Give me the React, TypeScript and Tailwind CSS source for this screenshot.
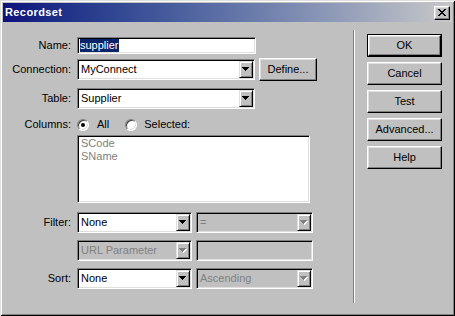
import type { ReactNode } from 'react'

function Arrow({ disabled }: { disabled?: boolean }) {
  return (
    <span className="flex h-full w-[14px] shrink-0 items-center justify-center border border-t-[#dfdfdf] border-l-[#dfdfdf] border-r-black border-b-black bg-[#c0c0c0] shadow-[inset_1px_1px_0_#fff,inset_-1px_-1px_0_#808080]">
      <svg width="8" height="5" viewBox="0 0 8 5" shapeRendering="crispEdges">
        {disabled && (
          <g fill="#fff">
            <rect x="1" y="1" width="7" height="1" />
            <rect x="2" y="2" width="5" height="1" />
            <rect x="3" y="3" width="3" height="1" />
            <rect x="4" y="4" width="1" height="1" />
          </g>
        )}
        <g fill={disabled ? '#808080' : '#000'}>
          <rect x="0" y="0" width="7" height="1" />
          <rect x="1" y="1" width="5" height="1" />
          <rect x="2" y="2" width="3" height="1" />
          <rect x="3" y="3" width="1" height="1" />
        </g>
      </svg>
    </span>
  )
}

function Combo({ value, className, disabled }: { value: string; className: string; disabled?: boolean }) {
  return (
    <div
      className={`flex h-[21px] border border-t-[#808080] border-l-[#808080] border-r-white border-b-white p-[1px] shadow-[inset_1px_1px_0_#000,inset_-1px_-1px_0_#dfdfdf] ${className} ${
        disabled ? 'bg-[#c0c0c0] text-[#808080]' : 'bg-white text-black'
      }`}
    >
      <span className="flex flex-1 items-center pl-[2px]">{value}</span>
      <Arrow disabled={disabled} />
    </div>
  )
}

function Button({ children, isDefault, className = '' }: { children: ReactNode; isDefault?: boolean; className?: string }) {
  const face = (
    <div className="flex h-full w-full items-center justify-center border border-t-white border-l-white border-r-black border-b-black bg-[#c0c0c0] shadow-[inset_-1px_-1px_0_#808080,inset_1px_1px_0_#dfdfdf]">
      {children}
    </div>
  )
  if (isDefault) {
    return <div className={`h-[23px] border border-black ${className}`}>{face}</div>
  }
  return <div className={`h-[23px] ${className}`}>{face}</div>
}

function Radio({ checked }: { checked?: boolean }) {
  return (
    <span className="flex h-[12px] w-[12px] items-center justify-center rounded-full border border-t-[#808080] border-l-[#808080] border-r-white border-b-white bg-white shadow-[inset_1px_1px_0_#404040,inset_-1px_-1px_0_#dfdfdf]">
      {checked && <span className="h-[4px] w-[4px] rounded-full bg-black" />}
    </span>
  )
}

function Row({ label, className = '', children }: { label?: string; className?: string; children: ReactNode }) {
  return (
    <div className={`flex items-center ${className}`}>
      <span className="w-[68px] text-right">{label}</span>
      <div className="ml-[6px] flex items-center">{children}</div>
    </div>
  )
}

export default function App() {
  return (
    <div className="flex h-[316px] w-[455px] flex-col bg-[#c0c0c0] p-[3px] font-['Liberation_Sans',Arial,sans-serif] text-[11px] text-black shadow-[inset_1px_1px_0_#dfdfdf,inset_-1px_-1px_0_#000,inset_2px_2px_0_#fff,inset_-2px_-2px_0_#808080]">
      <div className="flex h-[19px] shrink-0 items-center justify-between bg-linear-to-r from-[#10107c] to-[#c8c8c8] px-[2px]">
        <span className="font-bold tracking-[0.4px] text-white">Recordset</span>
        <div className="flex h-[14px] w-[16px] items-center justify-center border border-t-white border-l-white border-r-black border-b-black bg-[#c0c0c0] shadow-[inset_-1px_-1px_0_#808080,inset_1px_1px_0_#dfdfdf]">
          <svg width="8" height="7" viewBox="0 0 8 7" shapeRendering="crispEdges">
            <g fill="#000">
              <rect x="0" y="0" width="2" height="1" />
              <rect x="6" y="0" width="2" height="1" />
              <rect x="1" y="1" width="2" height="1" />
              <rect x="5" y="1" width="2" height="1" />
              <rect x="2" y="2" width="4" height="1" />
              <rect x="3" y="3" width="2" height="1" />
              <rect x="2" y="4" width="4" height="1" />
              <rect x="1" y="5" width="2" height="1" />
              <rect x="5" y="5" width="2" height="1" />
              <rect x="0" y="6" width="2" height="1" />
              <rect x="6" y="6" width="2" height="1" />
            </g>
          </svg>
        </div>
      </div>

      <div className="flex flex-1">
        <div className="flex w-[350px] flex-col pt-[15px]">
          <Row label="Name:" className="h-[17px]">
            <div className="flex h-[17px] w-[179px] items-center border border-t-[#808080] border-l-[#808080] border-r-white border-b-white bg-white pl-[2px] shadow-[inset_1px_1px_0_#000,inset_-1px_-1px_0_#dfdfdf]">
              <span className="bg-[#0a246a] leading-[13px] text-white">supplier</span>
            </div>
          </Row>

          <Row label="Connection:" className="mt-[5px] h-[21px]">
            <Combo value="MyConnect" className="w-[178px]" />
            <Button className="ml-[4px] w-[58px]">Define...</Button>
          </Row>

          <Row label="Table:" className="mt-[8px] h-[21px]">
            <Combo value="Supplier" className="w-[178px]" />
          </Row>

          <Row label="Columns:" className="mt-[9px] h-[13px]">
            <Radio checked />
            <span className="ml-[8px]">All</span>
            <span className="ml-[16px]">
              <Radio />
            </span>
            <span className="ml-[7px]">Selected:</span>
          </Row>

          <Row className="mt-[4px]">
            <div className="h-[68px] w-[233px] border border-t-[#808080] border-l-[#808080] border-r-white border-b-white bg-white pl-[3px] pt-[1px] leading-[13px] text-[#808080] shadow-[inset_1px_1px_0_#000,inset_-1px_-1px_0_#dfdfdf]">
              <div>SCode</div>
              <div>SName</div>
            </div>
          </Row>

          <Row label="Filter:" className="mt-[9px] h-[21px]">
            <Combo value="None" className="w-[115px]" />
            <Combo value="=" className="ml-[4px] w-[117px]" disabled />
          </Row>

          <Row className="mt-[7px] h-[21px]">
            <Combo value="URL Parameter" className="w-[115px]" disabled />
            <div className="ml-[4px] h-[21px] w-[117px] border border-t-[#808080] border-l-[#808080] border-r-white border-b-white bg-[#c0c0c0] shadow-[inset_1px_1px_0_#000,inset_-1px_-1px_0_#dfdfdf]" />
          </Row>

          <Row label="Sort:" className="mt-[7px] h-[21px]">
            <Combo value="None" className="w-[115px]" />
            <Combo value="Ascending" className="ml-[4px] w-[117px]" disabled />
          </Row>
        </div>

        <div className="mt-[8px] h-[273px] w-[2px] border-l border-r border-l-[#808080] border-r-white" />

        <div className="ml-[12px] flex w-[75px] flex-col gap-[5px] pt-[12px]">
          <Button isDefault>OK</Button>
          <Button>Cancel</Button>
          <Button>Test</Button>
          <Button>Advanced...</Button>
          <Button>Help</Button>
        </div>
      </div>
    </div>
  )
}
